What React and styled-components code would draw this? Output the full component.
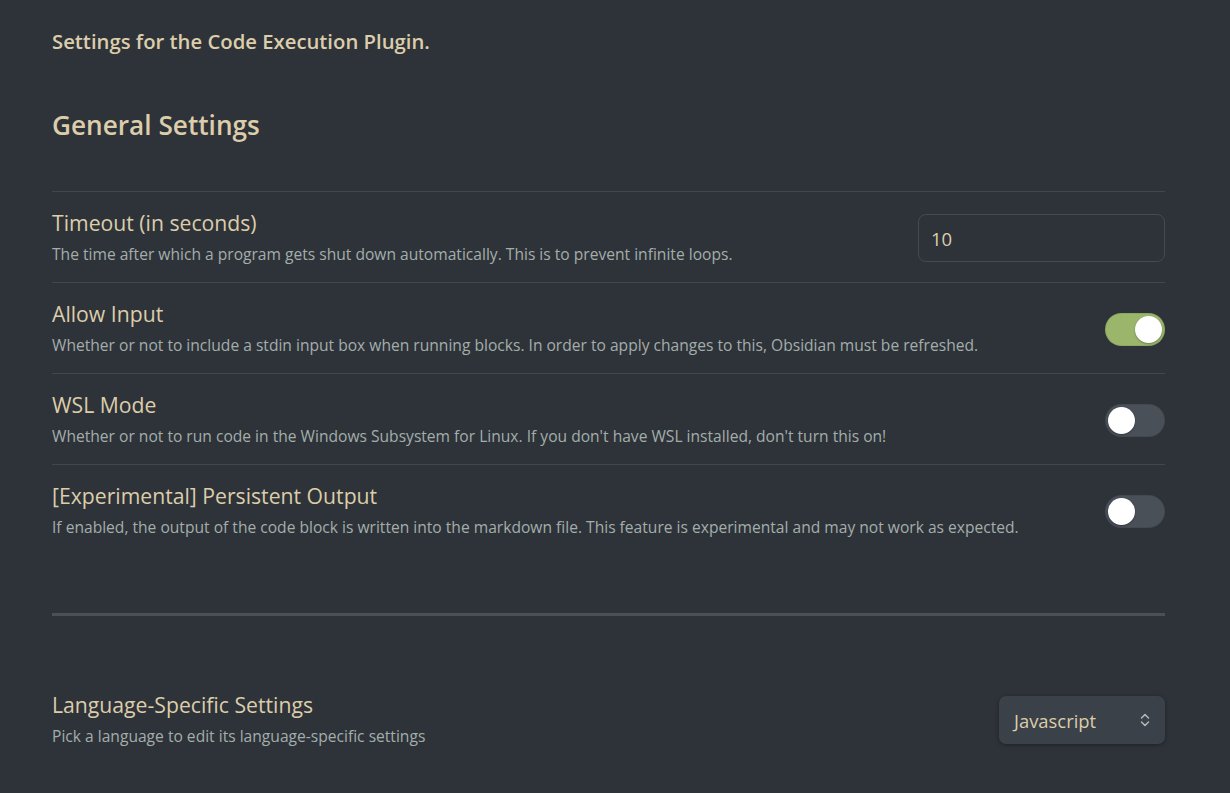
import React, { useState } from "react";
import styled, { createGlobalStyle } from "styled-components";

const GlobalStyle = createGlobalStyle`
  html, body {
    margin: 0;
    padding: 0;
    background: #2e3339;
  }
  body {
    font-family: "Open Sans", "Noto Sans", sans-serif;
  }
`;

const Page = styled.div`
  min-height: 793px;
  padding: 27px 65px 0 52px;
  box-sizing: border-box;
  background: #2e3339;
`;

const Intro = styled.p`
  margin: 0;
  font-size: 20.3px;
  font-weight: 600;
  line-height: 28px;
  color: #dccdab;
`;

const Heading = styled.h2`
  margin: 53px 0 49px;
  font-size: 26.2px;
  font-weight: 600;
  line-height: 34px;
  color: #dccdab;
`;

const Row = styled.div`
  display: flex;
  align-items: center;
  gap: 24px;
  border-top: ${(p) => (p.$plain ? "none" : "1px solid #41474e")};
  padding: 18px 0 16px;
`;

const Info = styled.div`
  flex: 1;
  min-width: 0;
`;

const Name = styled.div`
  font-size: 21.2px;
  line-height: 26px;
  color: #dccdab;
`;

const Desc = styled.div`
  margin-top: 6px;
  font-size: 15.6px;
  line-height: 24px;
  color: #a3aeab;
`;

const TextInput = styled.input`
  width: 247px;
  height: 48px;
  box-sizing: border-box;
  background: transparent;
  border: 1px solid #454a51;
  border-radius: 8px;
  padding: 0 12px;
  font-family: inherit;
  font-size: 18.5px;
  color: #dccdab;
  outline: none;
`;

const Toggle = styled.button`
  position: relative;
  width: 60px;
  height: 33px;
  flex-shrink: 0;
  border: none;
  border-radius: 17px;
  padding: 0;
  cursor: pointer;
  background: ${(p) => (p.$on ? "#9bb66b" : "#4a5058")};
  box-shadow: inset 0 0 0 1px rgba(0, 0, 0, 0.08);
`;

const Knob = styled.span`
  position: absolute;
  top: 3px;
  left: ${(p) => (p.$on ? "30px" : "3px")};
  width: 27px;
  height: 27px;
  border-radius: 50%;
  background: #ffffff;
  box-shadow: 0 1px 2px rgba(0, 0, 0, 0.3);
`;

const Divider = styled.hr`
  margin: 58px 0 58px;
  border: none;
  height: 3px;
  background: #4a5058;
`;

const Select = styled.div`
  display: flex;
  align-items: center;
  justify-content: space-between;
  width: 166px;
  height: 48px;
  box-sizing: border-box;
  padding: 0 14px 0 15px;
  border-radius: 7px;
  background: #3b4148;
  box-shadow: 0 1px 4px rgba(0, 0, 0, 0.35);
  font-size: 18.4px;
  color: #dccdab;
`;

function Switch({ initial }) {
  const [on, setOn] = useState(initial);
  return (
    <Toggle $on={on} onClick={() => setOn(!on)}>
      <Knob $on={on} />
    </Toggle>
  );
}

const toggles = [
  {
    name: "Allow Input",
    desc: "Whether or not to include a stdin input box when running blocks. In order to apply changes to this, Obsidian must be refreshed.",
    on: true,
  },
  {
    name: "WSL Mode",
    desc: "Whether or not to run code in the Windows Subsystem for Linux. If you don't have WSL installed, don't turn this on!",
    on: false,
  },
  {
    name: "[Experimental] Persistent Output",
    desc: "If enabled, the output of the code block is written into the markdown file. This feature is experimental and may not work as expected.",
    on: false,
  },
];

export default function App() {
  return (
    <>
      <GlobalStyle />
      <Page>
        <Intro>Settings for the Code Execution Plugin.</Intro>
        <Heading>General Settings</Heading>

        <Row>
          <Info>
            <Name>Timeout (in seconds)</Name>
            <Desc>The time after which a program gets shut down automatically. This is to prevent infinite loops.</Desc>
          </Info>
          <TextInput defaultValue="10" />
        </Row>

        {toggles.map((t) => (
          <Row key={t.name}>
            <Info>
              <Name>{t.name}</Name>
              <Desc>{t.desc}</Desc>
            </Info>
            <Switch initial={t.on} />
          </Row>
        ))}

        <Divider />

        <Row $plain>
          <Info>
            <Name>Language-Specific Settings</Name>
            <Desc>Pick a language to edit its language-specific settings</Desc>
          </Info>
          <Select>
            Javascript
            <svg width="12" height="16" viewBox="0 0 12 16" fill="none" stroke="#b4bab9" strokeWidth="1.5" strokeLinecap="round" strokeLinejoin="round">
              <path d="M2.5 6 L6 2.5 L9.5 6" />
              <path d="M2.5 10 L6 13.5 L9.5 10" />
            </svg>
          </Select>
        </Row>
      </Page>
    </>
  );
}
